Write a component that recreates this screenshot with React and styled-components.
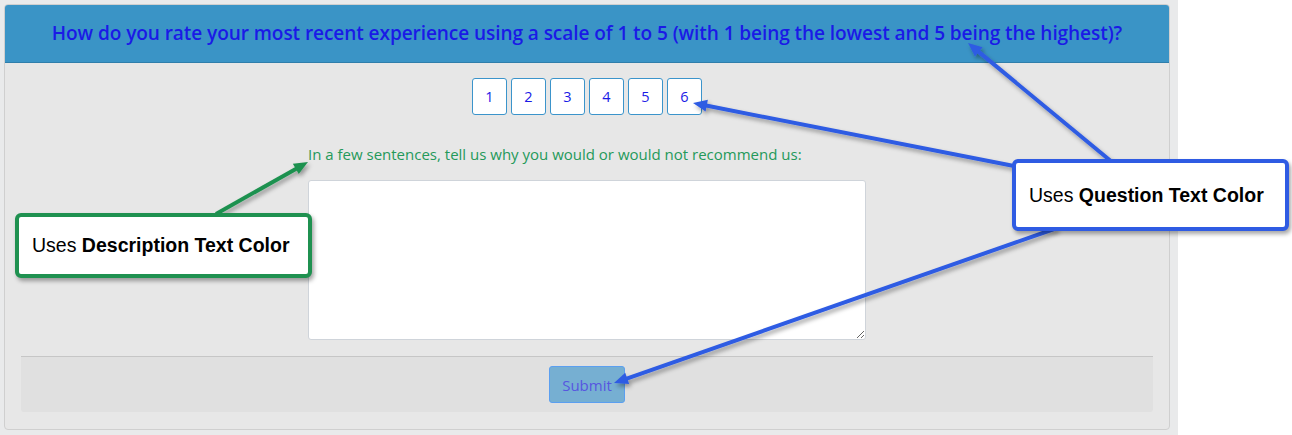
import React from "react";
import styled, { createGlobalStyle } from "styled-components";

const Global = createGlobalStyle`
  html, body { margin: 0; padding: 0; background: #ffffff; }
  body { font-family: "Open Sans", "Noto Sans", sans-serif; }
`;

const Page = styled.div`
  position: relative;
  width: 1292px;
  height: 435px;
  overflow: hidden;
`;

const Backdrop = styled.div`
  width: 1178px;
  height: 435px;
  box-sizing: border-box;
  background: #e9eaeb;
  padding: 4px 8px 0 4px;
`;

const Panel = styled.section`
  box-sizing: border-box;
  height: 426px;
  background: #e7e7e7;
  border: 1px solid #cfcfcf;
  border-radius: 4px;
  display: flex;
  flex-direction: column;
`;

const Header = styled.header`
  height: 56px;
  background: #3a94c6;
  border-bottom: 1px solid #2f7eab;
  border-radius: 3px 3px 0 0;
  display: flex;
  align-items: center;
  justify-content: center;
  padding-bottom: 1px;
`;

const Question = styled.h1`
  margin: 0;
  font-family: "Open Sans", sans-serif;
  font-size: 19.1px;
  font-weight: 600;
  letter-spacing: -0.1px;
  color: #1a1ae6;
`;

const Body = styled.div`
  flex: 1;
  display: flex;
  flex-direction: column;
  align-items: center;
  padding: 15px 16px 0;
`;

const Scale = styled.div`
  display: flex;
  gap: 4px;
`;

const ScaleButton = styled.button`
  width: 35px;
  height: 37px;
  box-sizing: border-box;
  background: #ffffff;
  border: 1px solid #3b94cb;
  border-radius: 3px;
  color: #1a1ae6;
  font-family: "Open Sans", sans-serif;
  font-size: 14.5px;
  padding: 0;
`;

const Comment = styled.div`
  margin-top: 30px;
  width: 558px;
  display: flex;
  flex-direction: column;
  gap: 16px;
`;

const Description = styled.label`
  font-family: "Open Sans", sans-serif;
  font-size: 15px;
  color: #24995a;
  line-height: 20px;
  margin-top: -1px;
`;

const TextArea = styled.textarea`
  box-sizing: border-box;
  width: 558px;
  height: 160px;
  background: #ffffff;
  border: 1px solid #cfd4da;
  border-radius: 3px;
  resize: both;
  margin: 0;
`;

const Footer = styled.footer`
  align-self: stretch;
  margin-top: 16px;
  height: 55px;
  background: #e0e0e0;
  border-top: 1px solid #c6c6c6;
  border-radius: 0 0 3px 3px;
  display: flex;
  align-items: center;
  justify-content: center;
`;

const Submit = styled.button`
  width: 76px;
  height: 37px;
  box-sizing: border-box;
  background: #76afd2;
  border: 1px solid #5b9ff0;
  border-radius: 3px;
  color: #5656e0;
  font-family: "Open Sans", sans-serif;
  font-size: 15px;
  padding: 0;
`;

const Arrows = styled.svg`
  position: absolute;
  left: 0;
  top: 0;
  width: 1292px;
  height: 435px;
  pointer-events: none;
`;

const Callout = styled.div`
  position: absolute;
  left: ${(p) => p.$x}px;
  top: ${(p) => p.$y}px;
  width: ${(p) => p.$w}px;
  height: ${(p) => p.$h}px;
  box-sizing: border-box;
  background: #ffffff;
  border: 4px solid ${(p) => p.$color};
  border-radius: 6px;
  box-shadow: 2px 3px 4px rgba(0, 0, 0, 0.35);
  display: flex;
  align-items: center;
  padding-left: 13px;
  font-family: "Liberation Sans", Arial, sans-serif;
  font-size: 19.5px;
  color: #000;
  b { font-weight: 700; }
`;

const Arrow = ({ x1, y1, x2, y2, color }) => {
  const dx = x2 - x1;
  const dy = y2 - y1;
  const len = Math.hypot(dx, dy);
  const ux = dx / len;
  const uy = dy / len;
  const hl = 14;
  const hw = 6;
  const bx = x2 - ux * hl;
  const by = y2 - uy * hl;
  const px = -uy;
  const py = ux;
  const head = `${x2},${y2} ${bx + px * hw},${by + py * hw} ${bx - px * hw},${by - py * hw}`;
  return (
    <g filter="url(#shadow)">
      <line x1={x1} y1={y1} x2={bx + ux * 2} y2={by + uy * 2} stroke={color} strokeWidth="4" />
      <polygon points={head} fill={color} />
    </g>
  );
};

export default function App() {
  return (
    <Page>
      <Global />
      <Backdrop>
        <Panel>
          <Header>
            <Question>
              How do you rate your most recent experience using a scale of 1 to 5 (with 1 being the lowest and 5 being the highest)?
            </Question>
          </Header>
          <Body>
            <Scale>
              {[1, 2, 3, 4, 5, 6].map((n) => (
                <ScaleButton key={n}>{n}</ScaleButton>
              ))}
            </Scale>
            <Comment>
              <Description>In a few sentences, tell us why you would or would not recommend us:</Description>
              <TextArea />
            </Comment>
            <Footer>
              <Submit>Submit</Submit>
            </Footer>
          </Body>
        </Panel>
      </Backdrop>
      <Arrows viewBox="0 0 1292 435">
        <defs>
          <filter id="shadow" x="-20%" y="-20%" width="140%" height="140%">
            <feDropShadow dx="2" dy="3" stdDeviation="2" floodColor="#000" floodOpacity="0.35" />
          </filter>
        </defs>
        <Arrow x1={216} y1={214} x2={308} y2={162} color="#1f9150" />
        <Arrow x1={1112} y1={162} x2={968} y2={43} color="#2f5be3" />
        <Arrow x1={1014} y1={166} x2={693} y2={103} color="#2f5be3" />
        <Arrow x1={1057} y1={228} x2={614} y2={383} color="#2f5be3" />
      </Arrows>
      <Callout $x={15} $y={213} $w={297} $h={65} $color="#1f9150">
        <span>Uses <b>Description Text Color</b></span>
      </Callout>
      <Callout $x={1012} $y={159} $w={277} $h={72} $color="#2f5be3">
        <span>Uses <b>Question Text Color</b></span>
      </Callout>
    </Page>
  );
}
